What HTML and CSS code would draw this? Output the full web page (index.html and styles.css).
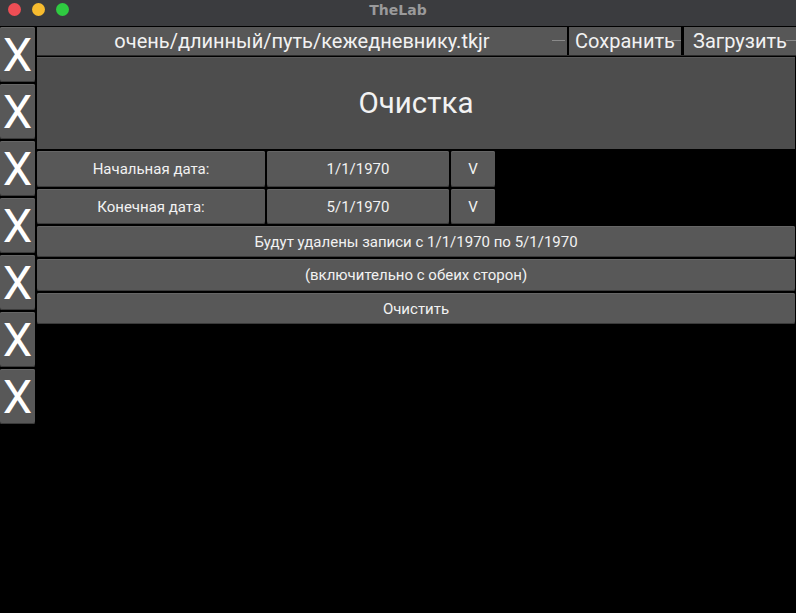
FILE: index.html
```html
<!DOCTYPE html>
<html>
<head>
<meta charset="utf-8">
<link rel="stylesheet" href="styles.css">
</head>
<body>
<div class="titlebar">
  <div class="lights">
    <span class="light red"></span>
    <span class="light yellow"></span>
    <span class="light green"></span>
  </div>
  <div class="title">TheLab</div>
</div>
<div class="app">
  <div class="side">
    <div class="xbtn">X</div>
    <div class="xbtn">X</div>
    <div class="xbtn">X</div>
    <div class="xbtn">X</div>
    <div class="xbtn">X</div>
    <div class="xbtn">X</div>
    <div class="xbtn">X</div>
  </div>
  <div class="main">
    <div class="topbar">
      <div class="field path">очень/длинный/путь/кежедневнику.tkjr<span class="dash d1"></span></div>
      <div class="field save">Сохранить<span class="dash d2"></span></div>
      <div class="field load">Загрузить<span class="dash d2"></span></div>
    </div>
    <div class="panel">Очистка</div>
    <div class="daterow r1">
      <div class="btn lbl">Начальная дата:</div>
      <div class="btn date">1/1/1970</div>
      <div class="btn pick">V</div>
    </div>
    <div class="daterow r2">
      <div class="btn lbl">Конечная дата:</div>
      <div class="btn date">5/1/1970</div>
      <div class="btn pick">V</div>
    </div>
    <div class="btn wide w1">Будут удалены записи с 1/1/1970 по 5/1/1970</div>
    <div class="btn wide w2">(включительно с обеих сторон)</div>
    <div class="btn wide w3">Очистить</div>
  </div>
</div>
</body>
</html>
```

FILE: styles.css
```css
html, body {
  margin: 0;
  padding: 0;
  background: #000;
  width: 796px;
  height: 613px;
  overflow: hidden;
  font-family: Roboto, "Noto Sans", sans-serif;
  color: #f2f2f2;
}
.titlebar {
  height: 26px;
  background: #3b3c3f;
  position: relative;
  display: flex;
  justify-content: center;
}
.lights {
  position: absolute;
  left: 8px;
  top: 3px;
  display: flex;
  gap: 11px;
}
.light {
  width: 13px;
  height: 13px;
  border-radius: 50%;
  display: block;
}
.red { background: #ee4e55; }
.yellow { background: #f7bc2f; }
.green { background: #2fcb41; }
.title {
  font-family: "DejaVu Sans", sans-serif;
  font-weight: bold;
  font-size: 14px;
  line-height: 20px;
  color: #9a9a9b;
}
.app {
  display: flex;
  gap: 2px;
  padding-top: 1px;
}
.side {
  width: 35px;
  display: flex;
  flex-direction: column;
  gap: 2px;
}
.xbtn {
  height: 55px;
  background: #585858;
  border-radius: 2px;
  box-shadow: inset 0 1px 0 #666, inset 0 -1px 0 #3a3a3a;
  font-size: 47px;
  line-height: 55px;
  text-align: center;
  color: #fff;
}
.main {
  flex: 1;
  display: flex;
  flex-direction: column;
  gap: 2px;
  margin-right: 1px;
}
.topbar {
  height: 28px;
  display: flex;
  margin-right: -1px;
  border-bottom: 1px solid #2a2a2a;
}
.field {
  background: #575757;
  font-size: 20px;
  line-height: 28px;
  text-align: center;
  position: relative;
}
.path { width: 530px; }
.save { width: 112px; margin-left: 2px; }
.load { width: 112px; margin-left: 3px; }
.dash {
  position: absolute;
  top: 13px;
  height: 1px;
  background: #8a8a8a;
}
.d1 { right: 2px; width: 13px; }
.d2 { right: 0; width: 10px; }
.panel {
  height: 92px;
  background: #4d4d4d;
  margin-top: -1px;
  box-shadow: inset 0 1px 0 #5a5a5a;
  font-size: 29.5px;
  display: flex;
  align-items: center;
  justify-content: center;
}
.btn {
  background: #585858;
  border-radius: 2px;
  box-shadow: inset 0 1px 0 #666, inset 0 -1px 0 #3a3a3a;
  font-size: 15px;
  display: flex;
  align-items: center;
  justify-content: center;
}
.daterow {
  display: flex;
  gap: 2px;
}
.r1 { height: 36px; }
.r2 { height: 35px; }
.lbl { width: 228px; }
.date { width: 182px; }
.pick { width: 44px; }
.w1 { height: 31px; }
.w2 { height: 32px; }
.w3 { height: 31px; }
```
